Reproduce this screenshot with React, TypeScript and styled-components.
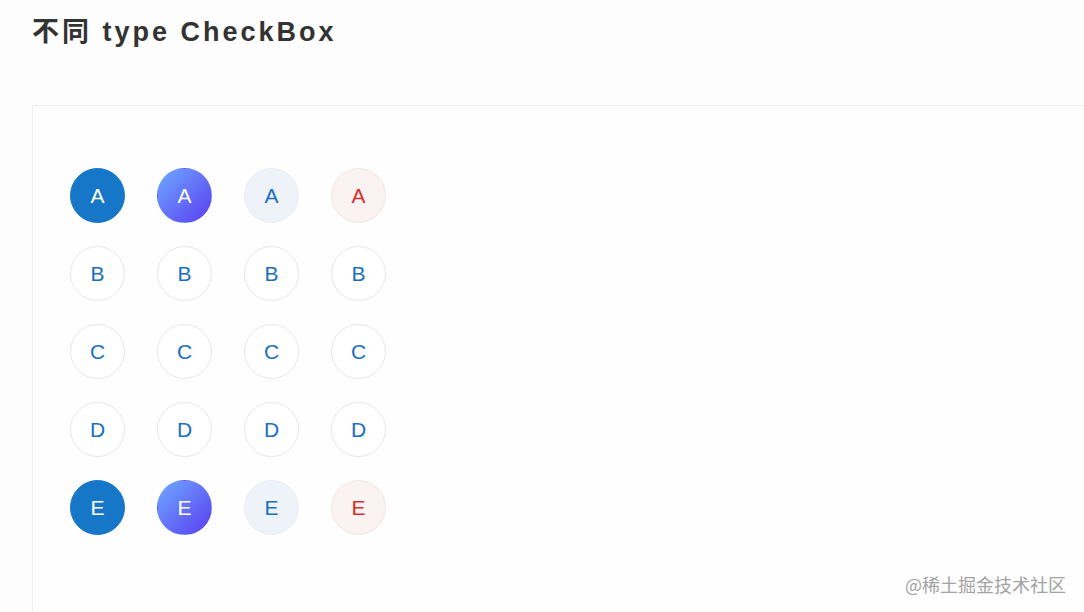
import styled, { createGlobalStyle, css } from "styled-components";

const GlobalStyle = createGlobalStyle`
  html, body {
    margin: 0;
    padding: 0;
    background: #fdfdfd;
    font-family: "Liberation Sans", Arial, "Noto Sans CJK SC", sans-serif;
  }
`;

type Variant = "solid" | "gradient" | "light" | "danger";

const rows = ["A", "B", "C", "D", "E"];
const variants: Variant[] = ["solid", "gradient", "light", "danger"];
const checkedRows = ["A", "E"];

const App = () => {
  return (
    <>
      <GlobalStyle />
      <Page>
        <Title>不同 type CheckBox</Title>
        <Card>
          <Grid>
            {rows.map((label) =>
              variants.map((v) => (
                <Circle
                  key={label + v}
                  $variant={v}
                  $checked={checkedRows.includes(label)}
                >
                  {label}
                </Circle>
              ))
            )}
          </Grid>
        </Card>
        <Watermark>@稀土掘金技术社区</Watermark>
      </Page>
    </>
  );
};

export default App;

const Page = styled.div`
  position: relative;
  width: 1084px;
  height: 612px;
  overflow: hidden;
  padding: 14px 0 0 32px;
  box-sizing: border-box;
`;

const Title = styled.h2`
  margin: 0;
  font-family: "Liberation Sans", Arial, "Noto Sans CJK SC", sans-serif;
  font-size: 27px;
  font-weight: bold;
  letter-spacing: 3px;
  color: #333333;
  line-height: 36px;
`;

const Card = styled.div`
  margin-top: 55px;
  width: 1080px;
  height: 560px;
  border-top: 1px solid #eeeeea;
  border-left: 1px solid #eeeeea;
  background: #fefefe;
  padding: 62px 0 0 37px;
  box-sizing: border-box;
`;

const Grid = styled.div`
  display: grid;
  grid-template-columns: repeat(4, 55px);
  column-gap: 32px;
  row-gap: 23px;
`;

const checkedStyles: Record<Variant, ReturnType<typeof css>> = {
  solid: css`
    background: #1677c8;
    border-color: #1677c8;
    color: #ffffff;
  `,
  gradient: css`
    background: linear-gradient(135deg, #6ea9ff 0%, #5a3df0 100%);
    border-color: transparent;
    color: #ffffff;
  `,
  light: css`
    background: #edf3f9;
    border-color: #e6eef5;
    color: #1a6fc0;
  `,
  danger: css`
    background: #faf3f2;
    border-color: #f1e6e4;
    color: #d2312a;
  `,
};

const Circle = styled.div<{ $variant: Variant; $checked: boolean }>`
  width: 55px;
  height: 55px;
  box-sizing: border-box;
  border-radius: 50%;
  border: 1px solid #e7e7e4;
  background: #ffffff;
  color: #1a6fc0;
  font-size: 21px;
  display: flex;
  align-items: center;
  justify-content: center;
  ${(p) => p.$checked && checkedStyles[p.$variant]}
`;

const Watermark = styled.div`
  position: absolute;
  right: 18px;
  bottom: 15px;
  font-size: 18px;
  color: #a3a3a3;
  font-family: "Noto Sans CJK SC", sans-serif;
`;
